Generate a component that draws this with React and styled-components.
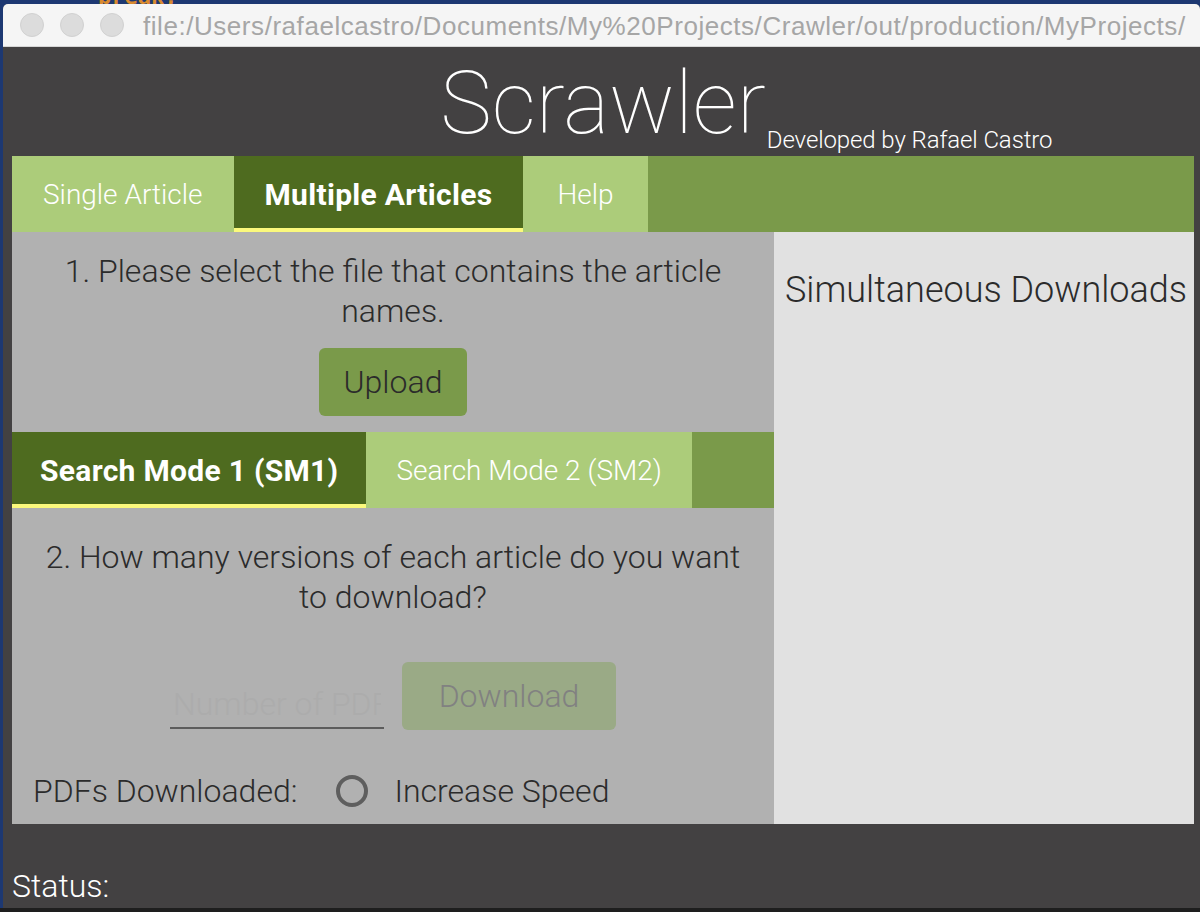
import styled, { createGlobalStyle, css } from "styled-components";

const GlobalStyle = createGlobalStyle`
    html, body {
        margin: 0;
        padding: 0;
    }
    body {
        font-family: Roboto, "Liberation Sans", sans-serif;
        background: #1e1e1e;
    }
    * {
        box-sizing: border-box;
    }
`;

export default function App() {
    return (
        <Desktop>
            <GlobalStyle />
            <Snippet>break;</Snippet>
            <Window>
                <TitleBar>
                    <Lights>
                        <Light />
                        <Light />
                        <Light />
                    </Lights>
                    <Url>file:/Users/rafaelcastro/Documents/My%20Projects/Crawler/out/production/MyProjects/</Url>
                </TitleBar>
                <Content>
                    <Header>
                        <Brand>
                            <Title>Scrawler</Title>
                            <Credit>Developed by Rafael Castro</Credit>
                        </Brand>
                    </Header>
                    <TabBar>
                        <Tab>Single Article</Tab>
                        <Tab $active>Multiple Articles</Tab>
                        <Tab $pad={34}>Help</Tab>
                    </TabBar>
                    <Panels>
                        <LeftPanel>
                            <Prompt $top={19}>1. Please select the file that contains the article names.</Prompt>
                            <Button $top={17} $width={148}>Upload</Button>
                            <TabBar $top={16}>
                                <Tab $active $pad={28}>Search Mode 1 (SM1)</Tab>
                                <Tab $pad={30}>Search Mode 2 (SM2)</Tab>
                            </TabBar>
                            <Prompt $top={29}>2. How many versions of each article do you want to download?</Prompt>
                            <DownloadRow>
                                <CountInput placeholder="Number of PDFs" />
                                <Button $width={214} disabled>Download</Button>
                            </DownloadRow>
                            <OptionsRow>
                                <span>PDFs Downloaded:</span>
                                <Radio />
                                <span>Increase Speed</span>
                            </OptionsRow>
                        </LeftPanel>
                        <RightPanel>
                            <SideTitle>Simultaneous Downloads</SideTitle>
                        </RightPanel>
                    </Panels>
                    <Status>Status:</Status>
                </Content>
            </Window>
        </Desktop>
    );
}

const Desktop = styled.div`
    position: relative;
    width: 1200px;
    height: 912px;
    overflow: hidden;
    padding: 4px 0 0 3px;
    background: linear-gradient(to bottom, #1d3872 0, #1d3872 908px, #1e1e1e 908px);
`;

const Snippet = styled.span`
    position: absolute;
    top: -16px;
    left: 98px;
    color: #d98a2e;
    font-family: "DejaVu Sans Mono", monospace;
    font-weight: 700;
    font-size: 22px;
`;

const Window = styled.div`
    position: relative;
    width: 1197px;
    height: 904px;
    background: #434142;
    border-radius: 5px 5px 0 0;
    overflow: hidden;
    display: flex;
    flex-direction: column;
`;

const TitleBar = styled.div`
    height: 43px;
    flex-shrink: 0;
    display: flex;
    align-items: center;
    gap: 19px;
    padding-left: 17px;
    background: #f5f5f5;
    border-bottom: 1px solid #d6d6d6;
`;

const Lights = styled.div`
    display: flex;
    gap: 16px;
`;

const Light = styled.span`
    width: 24px;
    height: 24px;
    border-radius: 50%;
    background: #dcdcdc;
    border: 1px solid #d1d1d1;
`;

const Url = styled.span`
    padding-top: 3px;
    font-family: "Liberation Sans", Arial, sans-serif;
    font-size: 26px;
    letter-spacing: 0.55px;
    color: #a6a6a6;
    white-space: nowrap;
`;

const Content = styled.div`
    flex: 1;
    display: flex;
    flex-direction: column;
    padding: 0 6px 0 9px;
`;

const Header = styled.header`
    height: 109px;
    padding-top: 12px;
    display: flex;
    justify-content: center;
`;

const Brand = styled.div`
    position: relative;
    height: 88px;
`;

const Title = styled.h1`
    margin: 0;
    font-size: 87px;
    line-height: 88px;
    font-weight: 100;
    color: #ffffff;
`;

const Credit = styled.span`
    position: absolute;
    left: 100%;
    top: 69px;
    margin-left: 1px;
    font-size: 24px;
    line-height: 24px;
    font-weight: 300;
    letter-spacing: -0.1px;
    color: #ffffff;
    white-space: nowrap;
`;

const TabBar = styled.nav`
    display: flex;
    align-self: stretch;
    height: 76px;
    flex-shrink: 0;
    margin-top: ${(p) => p.$top || 0}px;
    background: #7a9a4a;
`;

const Tab = styled.div`
    display: flex;
    align-items: center;
    padding: 0 ${(p) => p.$pad || 31}px;
    font-size: 28px;
    font-weight: 300;
    color: #ffffff;
    background: #accc7a;

    ${(p) =>
        p.$active &&
        css`
            font-size: 30px;
            font-weight: 700;
            letter-spacing: 0.3px;
            background: #4e6b1f;
            box-shadow: inset 0 -4px 0 #fbf97c;
        `}
`;

const Panels = styled.div`
    display: flex;
    height: 592px;
    flex-shrink: 0;
`;

const LeftPanel = styled.section`
    width: 762px;
    display: flex;
    flex-direction: column;
    align-items: center;
    background: #b1b1b1;
    color: #2b2b2b;
`;

const Prompt = styled.p`
    margin: ${(p) => p.$top}px 0 0;
    padding: 0 30px;
    font-size: 32px;
    line-height: 40px;
    font-weight: 300;
    text-align: center;
`;

const Button = styled.button`
    width: ${(p) => p.$width}px;
    height: 68px;
    margin-top: ${(p) => p.$top || 0}px;
    border: none;
    border-radius: 6px;
    background: #7a9a4a;
    color: #2b2b2b;
    font-family: Roboto, sans-serif;
    font-size: 32px;
    font-weight: 300;

    &:disabled {
        background: #9aaa86;
        color: #818181;
    }
`;

const DownloadRow = styled.div`
    display: flex;
    align-items: flex-end;
    gap: 18px;
    margin-top: 45px;
    height: 68px;
`;

const CountInput = styled.input`
    width: 214px;
    height: 48px;
    margin-bottom: 1px;
    padding: 0 3px;
    border: none;
    border-bottom: 2px solid #5c5c5c;
    background: transparent;
    font-family: Roboto, sans-serif;
    font-size: 32px;
    font-weight: 300;
    outline: none;

    &::placeholder {
        color: #acacac;
    }
`;

const OptionsRow = styled.div`
    align-self: stretch;
    display: flex;
    align-items: center;
    height: 40px;
    margin-top: 41px;
    padding-left: 21px;
    font-size: 32px;
    font-weight: 300;

    span:first-child {
        margin-right: 39px;
    }
`;

const Radio = styled.span`
    width: 32px;
    height: 32px;
    margin-right: 26px;
    border-radius: 50%;
    border: 4px solid #5e5e5e;
`;

const RightPanel = styled.section`
    flex: 1;
    padding: 36px 0 0 11px;
    background: #e1e1e1;
`;

const SideTitle = styled.h2`
    margin: 0;
    font-size: 36px;
    line-height: 44px;
    font-weight: 300;
    color: #2b2b2b;
    white-space: nowrap;
`;

const Status = styled.div`
    margin-top: 44px;
    font-size: 32px;
    line-height: 36px;
    font-weight: 300;
    color: #ffffff;
`;
